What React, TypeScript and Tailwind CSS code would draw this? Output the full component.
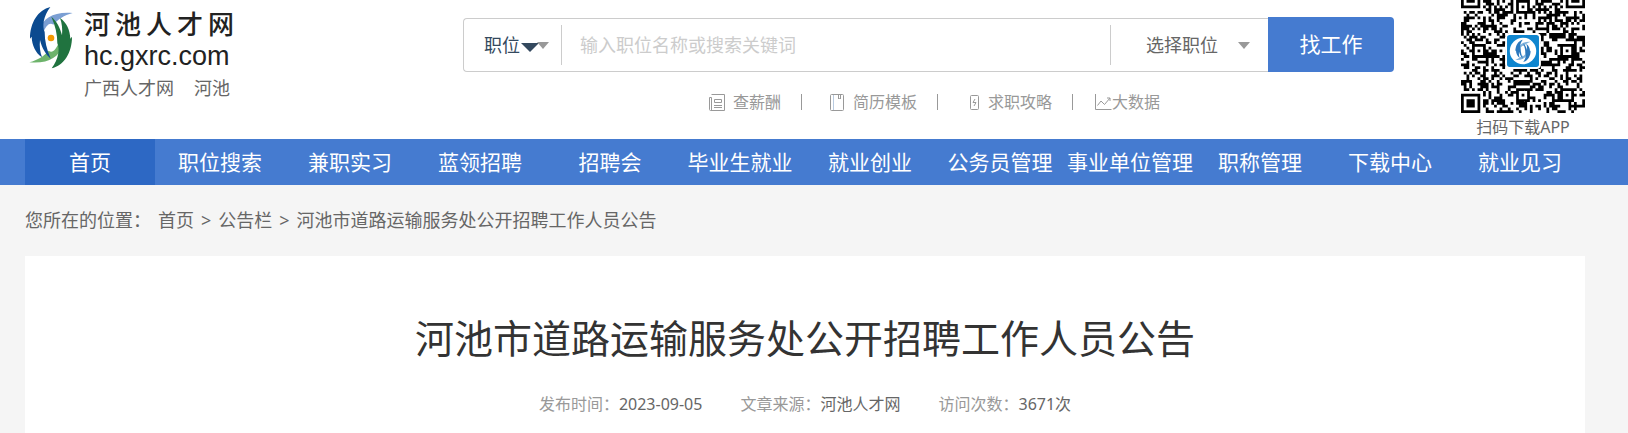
import { useState } from 'react';

const navItems = [
  '首页',
  '职位搜索',
  '兼职实习',
  '蓝领招聘',
  '招聘会',
  '毕业生就业',
  '就业创业',
  '公务员管理',
  '事业单位管理',
  '职称管理',
  '下载中心',
  '就业见习',
];

const LIGHT_WING = 'M40 76 C52 42 84 22 140 27 C114 34 96 46 82 62 C72 54 60 62 50 90 Z';
const DARK_WING =
  'M73 9 C36 18 12 56 12 104 L17 98 C18 124 28 146 48 160 C42 144 40 126 42 108 C48 132 58 150 74 164 C62 136 56 112 56 84 C48 68 52 36 73 9 Z';

function LogoMark() {
  return (
    <svg className="h-[68px] w-[50px]" viewBox="0 0 150 204" aria-hidden="true">
      <path d={LIGHT_WING} fill="#7b9fd3" />
      <path d={LIGHT_WING} fill="#6db36b" transform="rotate(180 75 101)" />
      <path d={DARK_WING} fill="#0b4a8f" />
      <path d={DARK_WING} fill="#20733f" transform="rotate(180 75 101)" />
      <circle cx="75" cy="102" r="10" fill="#f39800" />
    </svg>
  );
}

const QR_SIZE = 45;
const ALIGN = [6, 22, 38];

function isDark(x: number, y: number) {
  // finder patterns
  const corners = [
    [0, 0],
    [QR_SIZE - 7, 0],
    [0, QR_SIZE - 7],
  ];
  for (const [cx, cy] of corners) {
    const d = Math.max(Math.abs(x - cx - 3), Math.abs(y - cy - 3));
    if (d <= 4) return d === 3 || d <= 1;
  }
  // alignment patterns
  for (const ax of ALIGN) {
    for (const ay of ALIGN) {
      const overFinder =
        (ax === 6 && ay === 6) || (ax === 6 && ay === 38) || (ax === 38 && ay === 6);
      if (overFinder) continue;
      const d = Math.max(Math.abs(x - ax), Math.abs(y - ay));
      if (d <= 2) return d !== 1;
    }
  }
  if (x === 6 || y === 6) return (x + y) % 2 === 0;
  let h = (x * 374761393 + y * 668265263) | 0;
  h = Math.imul(h ^ (h >>> 13), 1274126177);
  return ((h ^ (h >>> 16)) & 1) === 1;
}

function qrPath() {
  let d = '';
  for (let y = 0; y < QR_SIZE; y++) {
    for (let x = 0; x < QR_SIZE; x++) {
      if (isDark(x, y)) d += `M${x} ${y}h1v1h-1z`;
    }
  }
  return d;
}

function QrCode() {
  return (
    <svg className="h-[113px] w-[124px]" viewBox="0 4 45 41" role="img" aria-label="APP">
      <path d={qrPath()} fill="#000" />
      <rect x="16" y="16" width="13" height="13" rx="1.5" fill="#fff" />
      <rect x="16.7" y="16.7" width="11.6" height="11.6" rx="1" fill="#0f86cf" />
      <circle cx="22.5" cy="22.5" r="4.8" fill="#fff" />
      <g transform="translate(19.2 18) scale(0.044)">
        <path d={LIGHT_WING} fill="#7fb2dc" />
        <path d={LIGHT_WING} fill="#7fb2dc" transform="rotate(180 75 101)" />
        <path d={DARK_WING} fill="#2b78bd" />
        <path d={DARK_WING} fill="#2b78bd" transform="rotate(180 75 101)" />
      </g>
    </svg>
  );
}

function Caret({ className }: { className: string }) {
  return (
    <svg className={className} viewBox="0 0 12 6" preserveAspectRatio="none" aria-hidden="true">
      <path d="M0 0H12L6 6Z" fill="currentColor" />
    </svg>
  );
}

function SalaryIcon() {
  return (
    <svg width="16" height="18" viewBox="0 0 16 18" fill="none" stroke="#999">
      <path d="M2.5 1.5H15.5V17.5H1.5C.9 17.5 .5 17 .5 16.5V4.5H2.5V17" />
      <path d="M5.5 6.5H12.5V9.5H5.5ZM5 12.5H13M5 14.5H13" />
    </svg>
  );
}

function ResumeIcon() {
  return (
    <svg width="15" height="18" viewBox="0 0 15 18" fill="none" stroke="#999">
      <rect x=".5" y="1.5" width="13" height="16" rx="1" />
      <path d="M3.5 2V17" stroke="#b9cbe0" />
      <path d="M8.5 2V6L9.5 5L10.5 6V2" />
    </svg>
  );
}

function GuideIcon() {
  return (
    <svg width="10" height="18" viewBox="0 0 10 18" fill="none" stroke="#999">
      <rect x=".5" y="2.5" width="8" height="14" rx="1" />
      <path d="M5 6L3 9.5H6L4 13" />
    </svg>
  );
}

function DataIcon() {
  return (
    <svg width="17" height="18" viewBox="0 0 17 18" fill="none" stroke="#999">
      <path d="M.5 1V16.5H16.5" />
      <path d="M2.5 12.5L6 8L9.5 11.5L15 5M12 5H15V8" />
    </svg>
  );
}

function Separator() {
  return <span className="h-4 w-px bg-[#999]" />;
}

function Header() {
  const [keyword, setKeyword] = useState('');

  return (
    <header className="flex h-[139px] items-start bg-white pr-[43px] pl-[26px]">
      <div className="flex w-[437px] shrink-0 pt-1">
        <LogoMark />
        <div className="flex flex-col pl-2">
          <a href="#" className="text-[#222]">
            <span className="flex w-[150px] justify-between text-[26px] leading-10 font-medium">
              {'河池人才网'.split('').map((char) => (
                <span key={char}>{char}</span>
              ))}
            </span>
            <span className="block font-['Liberation_Sans',sans-serif] text-[27px] leading-6">
              hc.gxrc.com
            </span>
          </a>
          <div className="flex gap-5 pt-2 text-lg leading-6 text-[#666]">
            <a href="#">广西人才网</a>
            <a href="#">河池</a>
          </div>
        </div>
      </div>

      <div className="min-w-0 flex-1">
        <form className="flex pt-[17px]" onSubmit={(e) => e.preventDefault()}>
          <div className="mt-px flex h-[54px] min-w-0 flex-1 items-center rounded-l border border-r-0 border-[#ccc]">
            <button
              type="button"
              className="flex h-10 shrink-0 items-center border-r border-[#ccc] pr-3 pl-5 text-lg text-[#34495e]"
            >
              职位
              <Caret className="ml-px mt-1 h-[9px] w-[18px]" />
              <Caret className="-ml-0.5 h-[7px] w-[12px] text-[#999]" />
            </button>
            <input
              type="text"
              aria-label="输入职位名称或搜索关键词"
              placeholder="输入职位名称或搜索关键词"
              value={keyword}
              onChange={(e) => setKeyword(e.target.value)}
              className="h-10 min-w-0 flex-1 pl-[18px] text-lg text-[#666] outline-none placeholder:text-[#ccc]"
            />
            <button
              type="button"
              className="flex h-10 w-[158px] shrink-0 items-center border-l border-[#ccc] pl-[35px] text-lg text-[#666]"
            >
              选择职位
              <Caret className="ml-5 h-[7px] w-[12px] text-[#999]" />
            </button>
          </div>
          <button
            type="submit"
            className="h-[55px] w-[126px] shrink-0 rounded-r bg-[#457bd0] text-[21px] text-white"
          >
            找工作
          </button>
        </form>

        <div className="flex items-center pt-[18px] pl-[246px] text-base leading-6 text-[#999]">
          <a href="#" className="mr-5 flex items-center gap-2">
            <SalaryIcon />
            查薪酬
          </a>
          <Separator />
          <a href="#" className="mr-5 ml-7 flex items-center gap-2">
            <ResumeIcon />
            简历模板
          </a>
          <Separator />
          <a href="#" className="mr-5 ml-8 flex items-center gap-2">
            <GuideIcon />
            求职攻略
          </a>
          <Separator />
          <a href="#" className="ml-[22px] flex items-center">
            <DataIcon />
            大数据
          </a>
        </div>
      </div>

      <div className="ml-[67px] flex w-[124px] shrink-0 flex-col items-center">
        <QrCode />
        <span className="text-base leading-7 text-[#666]">扫码下载APP</span>
      </div>
    </header>
  );
}

function Nav() {
  return (
    <nav className="bg-[#457bd0] pr-[43px] pl-[25px]">
      <ul className="grid grid-cols-12">
        {navItems.map((item, index) => (
          <li key={item}>
            <a
              href="#"
              className={`block text-center text-[21px] leading-[46px] whitespace-nowrap text-white ${
                index === 0 ? 'bg-[#2d68c4]' : ''
              }`}
            >
              {item}
            </a>
          </li>
        ))}
      </ul>
    </nav>
  );
}

function Meta({ label, value }: { label: string; value: string }) {
  return (
    <span className="text-[#999]">
      {label}：<span className="text-[#666]">{value}</span>
    </span>
  );
}

export default function App() {
  return (
    <div className="flex min-h-screen flex-col bg-[#f5f5f5] font-['Noto_Sans','Noto_Sans_CJK_SC',sans-serif]">
      <Header />
      <Nav />
      <main className="flex flex-1 flex-col pr-[43px] pl-[25px]">
        <div className="flex gap-[7px] text-lg leading-[71px] text-[#666]">
          <span>您所在的位置：</span>
          <a href="#">首页</a>
          <span>&gt;</span>
          <a href="#">公告栏</a>
          <span>&gt;</span>
          <span>河池市道路运输服务处公开招聘工作人员公告</span>
        </div>
        <article className="flex-1 bg-white pt-[57px] text-center">
          <h1 className="text-[39px] leading-[50px] text-[#333]">
            河池市道路运输服务处公开招聘工作人员公告
          </h1>
          <div className="flex justify-center gap-[38px] pt-[29px] text-base leading-6">
            <Meta label="发布时间" value="2023-09-05" />
            <Meta label="文章来源" value="河池人才网" />
            <Meta label="访问次数" value="3671次" />
          </div>
        </article>
      </main>
    </div>
  );
}
